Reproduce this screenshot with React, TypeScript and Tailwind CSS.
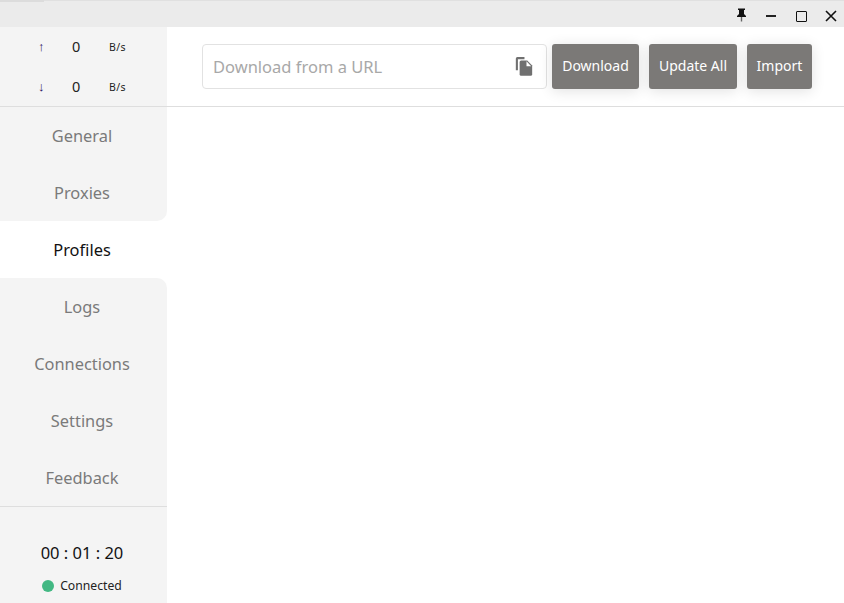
import React from 'react';

const font = { fontFamily: "'Noto Sans', sans-serif" };

const menu = ['General', 'Proxies', 'Profiles', 'Logs', 'Connections', 'Settings', 'Feedback'];
const active = 'Profiles';

function TitleBar() {
  return (
    <div className="relative flex h-[27px] shrink-0 items-center justify-end border-t border-[#e0e0e0] bg-[#ebebeb]">
      <div className="absolute left-0 top-[-1px] h-[2px] w-[44px] bg-[#dcdcdc]" />
      {/* pin */}
      <svg className="absolute left-[735px] top-[7px]" width="13" height="14" viewBox="0 0 13 14">
        <path d="M3 0.5h7v1.5H9v4l2 2v1H2V8l2-2V2H3z" fill="#111" />
        <path d="M5.8 9h1.4v4.5H5.8z" fill="#666" />
      </svg>
      <div className="absolute left-[766px] top-[14px] h-[2px] w-[10px] bg-[#222]" />
      <div className="absolute left-[796px] top-[10px] h-[11px] w-[11px] rounded-[1px] border-[1.5px] border-[#111]" />
      <svg className="absolute left-[825px] top-[9px]" width="12" height="12" viewBox="0 0 12 12">
        <path d="M1 1l10 10M11 1L1 11" stroke="#111" strokeWidth="1.6" />
      </svg>
    </div>
  );
}

function Speed({ arrow }: { arrow: string }) {
  return (
    <div className="flex h-10 items-center">
      <span className="w-[44.4px] text-right text-[13px] font-medium text-[#2a0f5c]">{arrow}</span>
      <span className="ml-[27.6px] w-[16px] text-[14.5px] text-[#222]">0</span>
      <span className="ml-[21px] mt-[2px] text-[10.5px] tracking-[0.4px] text-[#222]">B/s</span>
    </div>
  );
}

function Sidebar() {
  return (
    <div className="flex w-[167px] shrink-0 flex-col bg-white">
      <div className="h-[80px] border-b border-[#dedede] bg-[#f4f4f4]">
        <Speed arrow="↑" />
        <Speed arrow="↓" />
      </div>
      <div>
        {menu.map((name) => {
          const idx = menu.indexOf(name);
          const activeIdx = menu.indexOf(active);
          if (name === active) {
            return (
              <div key={name} className="flex h-[57px] items-center justify-center bg-white pr-[3px] pt-[2px] text-[16.4px] text-[#111]">
                {name}
              </div>
            );
          }
          const rounded =
            idx === activeIdx - 1 ? 'rounded-br-[10px]' : idx === activeIdx + 1 ? 'rounded-tr-[10px]' : '';
          return (
            <div
              key={name}
              className={`flex h-[57px] items-center justify-center bg-[#f4f4f4] pr-[3px] pt-[2px] text-[16.4px] text-[#7a7a7a] ${rounded}`}
            >
              {name}
            </div>
          );
        })}
      </div>
      <div className="flex flex-1 flex-col items-center border-t border-[#dedede] bg-[#f4f4f4] pr-[3px]">
        <div className="mt-[35px] text-[16.5px] leading-[22px] text-[#111]">00 : 01 : 20</div>
        <div className="mt-[14px] flex items-center">
          <span className="h-3 w-3 rounded-full bg-[#42b883]" />
          <span className="ml-[6px] text-[12.2px] leading-[16px] text-[#222]">Connected</span>
        </div>
      </div>
    </div>
  );
}

function Btn({ label, w, ml }: { label: string; w: string; ml: string }) {
  return (
    <button
      className={`flex h-[45px] items-center justify-center rounded-[3px] bg-[#7b7977] pb-[2px] text-[14px] text-white shadow-[0_2px_14px_rgba(0,0,0,0.12)] ${w} ${ml}`}
    >
      {label}
    </button>
  );
}

function Header() {
  return (
    <div className="flex h-[80px] shrink-0 items-start border-b border-[#dedede] pl-[35px] pt-[17px]">
      <div className="flex h-[45px] w-[345px] items-center justify-between rounded-[4px] border border-[#e2e2e2] pl-[10px] pr-[13px]">
        <span className="pt-[2px] text-[16.5px] text-[#a8a8a8]">Download from a URL</span>
        <svg width="18" height="19" viewBox="0 0 18 20">
          <path d="M2 0h7.5v2.4H2.6V14H0.4V1.6A1.6 1.6 0 0 1 2 0z" fill="#707070" />
          <path d="M6 3.6h6.4L17.6 9v9.2a1.6 1.6 0 0 1-1.6 1.6H6a1.6 1.6 0 0 1-1.6-1.6V5.2A1.6 1.6 0 0 1 6 3.6z" fill="#707070" />
          <path d="M11.6 4.6v5.2h5z" fill="#fff" />
        </svg>
      </div>
      <Btn label="Download" w="w-[87px]" ml="ml-[5px]" />
      <Btn label="Update All" w="w-[88px]" ml="ml-[10px]" />
      <Btn label="Import" w="w-[65px]" ml="ml-[10px]" />
    </div>
  );
}

export default function App() {
  return (
    <div className="flex h-[603px] w-[844px] flex-col overflow-hidden bg-white" style={font}>
      <TitleBar />
      <div className="flex flex-1">
        <Sidebar />
        <div className="flex-1">
          <Header />
        </div>
      </div>
    </div>
  );
}
